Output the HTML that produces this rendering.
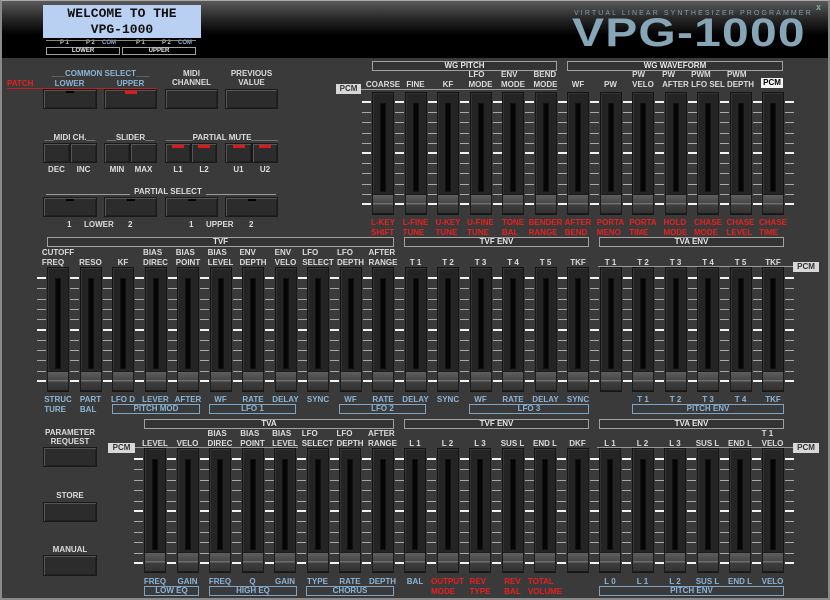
<!DOCTYPE html>
<html><head><meta charset="utf-8">
<style>
*{margin:0;padding:0;box-sizing:border-box}
body{width:830px;height:600px;overflow:hidden;background:#3a3a3a;font-family:"Liberation Sans",Arial,sans-serif;position:relative}
#frame{position:absolute;left:0;top:0;width:830px;height:600px;border:2px solid #8a8a8a;border-top:1px solid #aaa}
#hdr{position:absolute;left:2px;top:1px;width:826px;height:57px;background:linear-gradient(#5a5a5a 0px,#262626 18px,#000 34px,#000 57px)}
.a{position:absolute}
.l{font-weight:bold;font-size:8px;line-height:9px;color:#dcdcdc;white-space:nowrap}
.b{color:#8cb4d6}.r{color:#e82020}
.row{position:absolute;display:flex}
.row>div{width:32.5px;flex:none;display:flex;flex-direction:column;justify-content:flex-end;align-items:center;font-weight:bold;font-size:8px;line-height:9.5px;color:#dcdcdc;white-space:nowrap}
.row.bot>div{justify-content:flex-start}
.row.b>div{color:#8cb4d6}
.row>div.r{color:#e82020}
.box{position:absolute;height:10px;border:1px solid #a0a0a0;font-weight:bold;font-size:8px;line-height:8px;color:#e6e6e6;text-align:center;background:#333}
.bbox{position:absolute;height:10px;border:1px solid #7fa3c3;font-weight:bold;font-size:8px;line-height:8px;color:#8cb4d6;text-align:center}
.btn{position:absolute;background:#2c2c2c;border:1px solid #1a1a1a;box-shadow:inset 1px 1px 0 #555,inset -1px -1px 0 #202020}
.ind{position:absolute;top:1px;width:8px;height:2px;background:#000;left:50%;margin-left:-4px}
.ind.red{background:#e01818;width:12px;margin-left:-6px;height:3px}
.pcm{position:absolute;background:#d8d8d8;color:#333;font-weight:bold;font-size:8px;line-height:10px;text-align:center;height:10px}
.sl{position:absolute;width:22px;background:#242424;border:1px solid #151515;box-shadow:inset 1px 1px 0 #333}
.sl .slot{position:absolute;left:7px;width:6px;top:10px;bottom:22px;background:#050505;border:1px solid #111}
.sl .kn{position:absolute;left:-1px;width:22px;height:20px;bottom:0;background:linear-gradient(#5e5e5e,#474747 45%,#8a8a8a 48%,#3e3e3e 55%,#333);border:1px solid #1c1c1c}
.tk{position:absolute;height:1px;background:#a8a8a8}
.tk.M{height:2px;background:#f2f2f2}
.hl{position:absolute;height:1px;background:#9a9a9a}
</style></head><body>
<div id="hdr"></div>
<div id="frame"></div>

<!-- LCD -->
<div class="a" style="left:43px;top:5px;width:158px;height:33px;background:#b9d0f2;font-family:'Liberation Mono',monospace;font-weight:bold;font-size:13px;line-height:16px;color:#111;text-align:center;padding-top:1px">WELCOME TO THE<br>VPG-1000</div>
<div class="a l" style="left:46px;top:40px;width:150px;font-size:6px;line-height:7px;color:#ccc"><span style="position:absolute;left:14px">P 1</span><span style="position:absolute;left:40px">P 2</span><span style="position:absolute;left:56px;color:#8cb4d6">COM</span><span style="position:absolute;left:90px">P 1</span><span style="position:absolute;left:116px">P 2</span><span style="position:absolute;left:132px;color:#8cb4d6">COM</span></div>
<div class="a" style="left:46px;top:40px;width:150px;height:1px;background:#888"></div>
<div class="box" style="left:46px;top:47px;width:74px;height:8px;line-height:6px;font-size:6px;background:none">LOWER</div>
<div class="box" style="left:122px;top:47px;width:74px;height:8px;line-height:6px;font-size:6px;background:none">UPPER</div>

<!-- logo -->
<div class="a" style="left:574px;top:10px;width:236px;font-size:7px;letter-spacing:2.1px;color:#7f9db0;white-space:nowrap">VIRTUAL LINEAR SYNTHESIZER PROGRAMMER</div>
<div class="a" style="left:572px;top:13px;font-size:40px;font-weight:bold;line-height:40px;color:#86a6b8;transform:scaleX(1.2);transform-origin:left top;letter-spacing:1px;white-space:nowrap">VPG-1000</div>
<div class="a" style="left:816px;top:2px;font-size:9px;color:#8aa;font-weight:bold">x</div>

<!-- left panel -->
<div class="a l r" style="left:7px;top:79px">PATCH</div>
<div class="a l b" style="left:44px;top:69px;width:113px;text-align:center">___COMMON SELECT___</div>
<div class="a l b" style="left:43px;top:79px;width:53px;text-align:center">LOWER</div>
<div class="a l b" style="left:104px;top:79px;width:53px;text-align:center">UPPER</div>
<div class="a" style="left:7px;top:88px;width:150px;height:1px;background:#c02020"></div>
<div class="a l" style="left:165px;top:69px;width:53px;text-align:center">MIDI<br>CHANNEL</div>
<div class="a l" style="left:225px;top:69px;width:53px;text-align:center">PREVIOUS<br>VALUE</div>
<div class="btn" style="left:43px;top:89px;width:54px;height:20px"><div class="ind"></div></div>
<div class="btn" style="left:104px;top:89px;width:53px;height:20px"><div class="ind red"></div></div>
<div class="btn" style="left:165px;top:89px;width:53px;height:20px"></div>
<div class="btn" style="left:225px;top:89px;width:53px;height:20px"></div>

<div class="a l" style="left:43px;top:133px;width:54px;text-align:center">__MIDI CH.__</div>
<div class="a l" style="left:104px;top:133px;width:53px;text-align:center">__SLIDER__</div>
<div class="a l" style="left:165px;top:133px;width:114px;text-align:center">______PARTIAL MUTE______</div>
<div class="btn" style="left:43px;top:143px;width:27px;height:20px"></div>
<div class="btn" style="left:70px;top:143px;width:27px;height:20px"></div>
<div class="btn" style="left:104px;top:143px;width:26px;height:20px"></div>
<div class="btn" style="left:130px;top:143px;width:27px;height:20px"></div>
<div class="btn" style="left:165px;top:143px;width:26px;height:20px"><div class="ind red"></div></div>
<div class="btn" style="left:191px;top:143px;width:26px;height:20px"><div class="ind red"></div></div>
<div class="btn" style="left:225px;top:143px;width:27px;height:20px"><div class="ind red"></div></div>
<div class="btn" style="left:252px;top:143px;width:26px;height:20px"><div class="ind red"></div></div>
<div class="a l" style="left:43px;top:165px;width:27px;text-align:center">DEC</div>
<div class="a l" style="left:70px;top:165px;width:27px;text-align:center">INC</div>
<div class="a l" style="left:104px;top:165px;width:26px;text-align:center">MIN</div>
<div class="a l" style="left:130px;top:165px;width:27px;text-align:center">MAX</div>
<div class="a l" style="left:165px;top:165px;width:26px;text-align:center">L1</div>
<div class="a l" style="left:191px;top:165px;width:26px;text-align:center">L2</div>
<div class="a l" style="left:225px;top:165px;width:27px;text-align:center">U1</div>
<div class="a l" style="left:252px;top:165px;width:26px;text-align:center">U2</div>

<div class="a" style="left:46px;top:194px;width:230px;height:1px;background:#999"></div>
<div class="a l" style="left:130px;top:187px;width:76px;text-align:center;background:#3a3a3a">PARTIAL SELECT</div>
<div class="btn" style="left:43px;top:197px;width:54px;height:20px"><div class="ind"></div></div>
<div class="btn" style="left:104px;top:197px;width:53px;height:20px"><div class="ind"></div></div>
<div class="btn" style="left:165px;top:197px;width:53px;height:20px"><div class="ind"></div></div>
<div class="btn" style="left:225px;top:197px;width:53px;height:20px"><div class="ind"></div></div>
<div class="a l" style="left:67px;top:220px">1</div>
<div class="a l" style="left:84px;top:220px">LOWER</div>
<div class="a l" style="left:128px;top:220px">2</div>
<div class="a l" style="left:189px;top:220px">1</div>
<div class="a l" style="left:206px;top:220px">UPPER</div>
<div class="a l" style="left:249px;top:220px">2</div>

<div class="a l" style="left:40px;top:428px;width:60px;text-align:center">PARAMETER<br>REQUEST</div>
<div class="btn" style="left:43px;top:447px;width:54px;height:20px"></div>
<div class="a l" style="left:43px;top:491px;width:54px;text-align:center">STORE</div>
<div class="btn" style="left:43px;top:502px;width:54px;height:20px"></div>
<div class="a l" style="left:43px;top:545px;width:54px;text-align:center">MANUAL</div>
<div class="btn" style="left:43px;top:555px;width:54px;height:21px"></div>

<!-- section boxes -->
<div class="box" style="left:372px;top:61px;width:185px">WG PITCH</div>
<div class="box" style="left:567px;top:61px;width:216px">WG WAVEFORM</div>
<div class="box" style="left:47px;top:237px;width:347px">TVF</div>
<div class="box" style="left:404px;top:237px;width:185px">TVF ENV</div>
<div class="box" style="left:599px;top:237px;width:185px">TVA ENV</div>
<div class="box" style="left:144px;top:419px;width:250px">TVA</div>
<div class="box" style="left:404px;top:419px;width:185px">TVF ENV</div>
<div class="box" style="left:599px;top:419px;width:185px">TVA ENV</div>

<div class="bbox" style="left:112px;top:404px;width:88px">PITCH MOD</div>
<div class="bbox" style="left:209px;top:404px;width:87px">LFO 1</div>
<div class="bbox" style="left:339px;top:404px;width:87px">LFO 2</div>
<div class="bbox" style="left:469px;top:404px;width:120px">LFO 3</div>
<div class="bbox" style="left:632px;top:404px;width:152px">PITCH ENV</div>
<div class="bbox" style="left:144px;top:586px;width:55px">LOW EQ</div>
<div class="bbox" style="left:209px;top:586px;width:88px">HIGH EQ</div>
<div class="bbox" style="left:306px;top:586px;width:88px">CHORUS</div>
<div class="bbox" style="left:599px;top:586px;width:185px">PITCH ENV</div>

<!-- lines & PCM -->
<div class="hl" style="left:360px;top:89px;width:197px"></div>
<div class="pcm" style="left:336px;top:84px;width:25px">PCM</div>
<div class="pcm" style="left:761px;top:78px;width:22px;background:#f4f4f4;color:#000">PCM</div>
<div class="hl" style="left:598px;top:266px;width:196px"></div>
<div class="pcm" style="left:793px;top:262px;width:26px">PCM</div>
<div class="hl" style="left:135px;top:447px;width:163px"></div>
<div class="pcm" style="left:108px;top:443px;width:27px">PCM</div>
<div class="hl" style="left:597px;top:447px;width:196px"></div>
<div class="pcm" style="left:793px;top:443px;width:26px">PCM</div>

<!-- row 1 labels -->
<div class="row" style="left:366.75px;top:70px;height:19px">
<div>COARSE</div><div>FINE</div><div>KF</div><div>LFO<br>MODE</div><div>ENV<br>MODE</div><div>BEND<br>MODE</div><div>WF</div><div>PW</div><div>PW<br>VELO</div><div>PW<br>AFTER</div><div>PWM<br>LFO SEL</div><div>PWM<br>DEPTH</div><div></div></div>
<div class="row bot" style="left:366.75px;top:218px;height:19px">
<div class="r">L-KEY<br>SHIFT</div><div class="r">L-FINE<br>TUNE</div><div class="r">U-KEY<br>TUNE</div><div class="r">U-FINE<br>TUNE</div><div class="r">TONE<br>BAL</div><div class="r">BENDER<br>RANGE</div><div class="r">AFTER<br>BEND</div><div class="r">PORTA<br>MENO</div><div class="r">PORTA<br>TIME</div><div class="r">HOLD<br>MODE</div><div class="r">CHASE<br>MODE</div><div class="r">CHASE<br>LEVEL</div><div class="r">CHASE<br>TIME</div></div>

<!-- row 2 labels -->
<div class="row" style="left:41.75px;top:248px;height:19px">
<div>CUTOFF<br>FREQ</div><div>RESO</div><div>KF</div><div>BIAS<br>DIREC</div><div>BIAS<br>POINT</div><div>BIAS<br>LEVEL</div><div>ENV<br>DEPTH</div><div>ENV<br>VELO</div><div>LFO<br>SELECT</div><div>LFO<br>DEPTH</div><div>AFTER<br>RANGE</div><div>T 1</div><div>T 2</div><div>T 3</div><div>T 4</div><div>T 5</div><div>TKF</div><div>T 1</div><div>T 2</div><div>T 3</div><div>T 4</div><div>T 5</div><div>TKF</div></div>
<div class="row bot b" style="left:41.75px;top:395px;height:19px">
<div>STRUC<br>TURE</div><div>PART<br>BAL</div><div>LFO D</div><div>LEVER</div><div>AFTER</div><div>WF</div><div>RATE</div><div>DELAY</div><div>SYNC</div><div>WF</div><div>RATE</div><div>DELAY</div><div>SYNC</div><div>WF</div><div>RATE</div><div>DELAY</div><div>SYNC</div><div></div><div>T 1</div><div>T 2</div><div>T 3</div><div>T 4</div><div>TKF</div></div>

<!-- row 3 labels -->
<div class="row" style="left:138.75px;top:429px;height:19px">
<div>LEVEL</div><div>VELO</div><div>BIAS<br>DIREC</div><div>BIAS<br>POINT</div><div>BIAS<br>LEVEL</div><div>LFO<br>SELECT</div><div>LFO<br>DEPTH</div><div>AFTER<br>RANGE</div><div>L 1</div><div>L 2</div><div>L 3</div><div>SUS L</div><div>END L</div><div>DKF</div><div>L 1</div><div>L 2</div><div>L 3</div><div>SUS L</div><div>END L</div><div>T 1<br>VELO</div></div>
<div class="row bot b" style="left:138.75px;top:577px;height:19px">
<div>FREQ</div><div>GAIN</div><div>FREQ</div><div>Q</div><div>GAIN</div><div>TYPE</div><div>RATE</div><div>DEPTH</div><div>BAL</div><div class="r">OUTPUT<br>MODE</div><div class="r">REV<br>TYPE</div><div class="r">REV<br>BAL</div><div class="r">TOTAL<br>VOLUME</div><div></div><div>L 0</div><div>L 1</div><div>L 2</div><div>SUS L</div><div>END L</div><div>VELO</div></div>

<div id="sliders"></div>
<script>
(function(){
var rows=[[372,13,92,215,102,204],[47,23,267,392,278,381],[144,20,448,573,459,563]];
var h='';
rows.forEach(function(r){
 var x0=r[0],n=r[1],t=r[2],b=r[3],y0=r[4],y1=r[5];
 for(var k=0;k<=10;k++){
  var y=Math.round(y0+(y1-y0)*k/10);var M=(k%5==0);
  for(var i=-1;i<n;i++){
   var gx=(i<0)?x0-10:x0+i*32.5+23;
   h+='<div class="tk'+(M?' M':'')+'" style="left:'+gx.toFixed(1)+'px;top:'+(M?y-1:y)+'px;width:9px"></div>';
  }
 }
 for(var i=0;i<n;i++){
  var x=x0+i*32.5;
  h+='<div class="sl" style="left:'+x.toFixed(1)+'px;top:'+t+'px;height:'+(b-t)+'px"><div class="slot"></div><div class="kn"></div></div>';
 }
});
document.getElementById('sliders').innerHTML=h;
})();
</script>
</body></html>
